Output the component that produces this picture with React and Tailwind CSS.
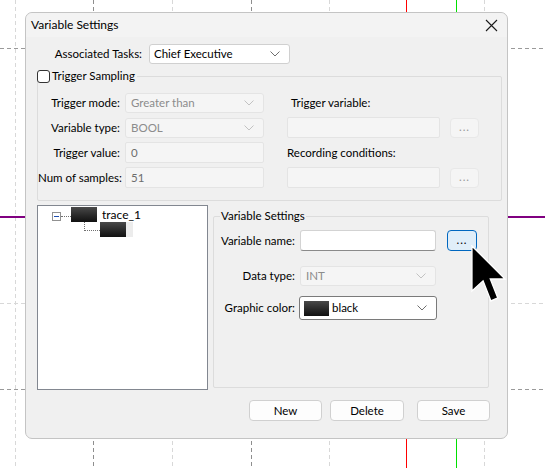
import React from 'react';

const FONT = "font-['Lato','Liberation_Sans',sans-serif]";

// chevron used by every combo box
function Chevron({ color = '#6f6f6f' }) {
  return (
    <svg width="10" height="6" viewBox="0 0 10 6" className="shrink-0">
      <polyline points="0.5,0.5 5,5 9.5,0.5" fill="none" stroke={color} strokeWidth="1" />
    </svg>
  );
}

/**
 * Canvas behind the dialog — dashed grid + a few signal lines
 */
function Backdrop() {
  const light = [15, 172, 329, 484];
  const dark = [93, 251];
  return (
    <svg className="absolute inset-0" width="545" height="468">
      {light.map(x => (
        <line key={x} x1={x + 0.5} y1="0" x2={x + 0.5} y2="468" stroke="#d8d8d8" strokeDasharray="4 3" />
      ))}
      {dark.map(x => (
        <line key={x} x1={x + 0.5} y1="0" x2={x + 0.5} y2="468" stroke="#8e8e8e" strokeDasharray="4 3" />
      ))}
      <line x1="0" y1="48.5" x2="545" y2="48.5" stroke="#9a9a9a" strokeDasharray="4 3" />
      <line x1="0" y1="303.5" x2="545" y2="303.5" stroke="#d8d8d8" strokeDasharray="4 3" />
      <line x1="0" y1="389.5" x2="545" y2="389.5" stroke="#9a9a9a" strokeDasharray="4 3" />
      <line x1="406.5" y1="0" x2="406.5" y2="468" stroke="#ff0000" />
      <line x1="456.5" y1="0" x2="456.5" y2="468" stroke="#00e000" />
      <line x1="0" y1="217" x2="545" y2="217" stroke="#800080" strokeWidth="2" />
    </svg>
  );
}

function DisabledSelect({ value, width = 'w-[139px]' }) {
  return (
    <div className={`flex items-center justify-between h-[20px] ${width} rounded-[3px] border border-[#e4e4e4] bg-[#f5f5f5] pl-[5px] pr-[9px] text-[#8c8c8c]`}>
      <span>{value}</span>
      <Chevron color="#c2c2c2" />
    </div>
  );
}

function DisabledInput({ value = '', width = 'w-[139px]' }) {
  return (
    <div className={`flex items-center h-[21px] ${width} rounded-[2px] border border-[#e4e4e4] bg-[#f5f5f5] pl-[5px] text-[#6d6d6d]`}>
      {value}
    </div>
  );
}

function DotsButton() {
  return (
    <div className="ml-[10px] flex items-end justify-center h-[20px] w-[29px] rounded-[4px] border border-[#e8e8e8] bg-[#f5f5f5] pb-[4px] text-[#9a9a9a] tracking-[1px] leading-none">
      ...
    </div>
  );
}

function TriggerRow({ label, left, right }) {
  return (
    <div className="flex items-center h-[21px]">
      <div className="w-[82px] text-right whitespace-nowrap">{label}</div>
      <div className="ml-[5px]">{left}</div>
      <div className="ml-[23px] flex items-center">{right}</div>
    </div>
  );
}

function TreeView() {
  return (
    <div className="w-[171px] h-[185px] border border-[#828790] bg-white">
      <div className="flex items-center mt-[1px] ml-[14px] h-[15px]">
        <div className="w-[9px] h-[9px] mt-[3px] border border-[#919191] flex items-center justify-center">
          <div className="w-[5px] h-px bg-[#1f4fb0]" />
        </div>
        <div className="w-[10px] mt-[3px] border-t border-dotted border-[#707070]" />
        <div className="w-[26px] h-[15px] bg-linear-to-b from-[#4a4a4a] to-[#111111]" />
        <span className="ml-[5px] text-[12px]">trace_1</span>
      </div>
      <div className="flex ml-[46px] h-[15px]">
        <div className="w-[16px] h-[9px] border-l border-b border-dotted border-[#707070]" />
        <div className="w-[26px] h-[15px] bg-linear-to-b from-[#4a4a4a] to-[#111111]" />
        <div className="w-[7px] h-[15px] bg-[#ececec]" />
      </div>
    </div>
  );
}

function Cursor() {
  return (
    <svg className="absolute left-[445px] top-[232px]" width="38" height="62" viewBox="-0.3 -0.3 12.6 20.6">
      <path
        d="M0 0 V15 L3.7 11.6 L6.3 18.3 L8.6 17.3 L6.1 11 H11 Z"
        fill="#000"
        stroke="#fff"
        strokeWidth="0.45"
        strokeLinejoin="miter"
      />
    </svg>
  );
}

export default function App() {
  return (
    <div className={`relative w-[545px] h-[468px] overflow-hidden bg-white pt-[12px] pl-[25px] text-[11.5px] text-black ${FONT}`}>
      <Backdrop />

      <div className="relative w-[483px] h-[427px] rounded-[7px] border border-[#c4c4c4] bg-[#f0f0f0]">
        {/* Title bar */}
        <div className="flex items-center justify-between h-[24px] pl-[5px] pr-[9px] bg-[#f3f3f3] rounded-t-[7px]">
          <span className="text-[12px]">Variable Settings</span>
          <svg width="13" height="13" viewBox="0 0 13 13">
            <path d="M1 1 L12 12 M12 1 L1 12" stroke="#1a1a1a" strokeWidth="1.1" />
          </svg>
        </div>

        {/* Associated tasks */}
        <div className="mt-[7px] flex items-center h-[20px]">
          <div className="w-[116px] text-right">Associated Tasks:</div>
          <div className="ml-[7px] flex items-center justify-between h-[20px] w-[141px] rounded-[3px] border border-[#d0d0d0] bg-white pl-[4px] pr-[9px]">
            <span>Chief Executive</span>
            <Chevron />
          </div>
        </div>

        {/* Trigger sampling group */}
        <fieldset className="mt-[4px] ml-[11px] w-[465px] rounded-[2px] border border-[#dcdcdc] pb-[12px]">
          <legend className="h-[16px] pr-[2px]">
            <span className="flex items-center h-[16px] -ml-[1px]">
              <span className="w-[13px] h-[13px] rounded-[3px] border border-[#333] bg-white" />
              <span className="ml-[2px]">Trigger Sampling</span>
            </span>
          </legend>
          <div className="mt-[8px] flex flex-col gap-[4px]">
            <TriggerRow
              label="Trigger mode:"
              left={<DisabledSelect value="Greater than" />}
              right={<span className="pl-[4px]">Trigger variable:</span>}
            />
            <TriggerRow
              label="Variable type:"
              left={<DisabledSelect value="BOOL" />}
              right={
                <>
                  <DisabledInput width="w-[153px]" />
                  <DotsButton />
                </>
              }
            />
            <TriggerRow
              label="Trigger value:"
              left={<DisabledInput value="0" />}
              right={<span>Recording conditions:</span>}
            />
            <TriggerRow
              label="Num of samples:"
              left={<DisabledInput value="51" />}
              right={
                <>
                  <DisabledInput width="w-[153px]" />
                  <DotsButton />
                </>
              }
            />
          </div>
        </fieldset>

        {/* Tree + variable settings */}
        <div className="mt-[4px] ml-[11px] flex items-start">
          <TreeView />
          <fieldset className="ml-[5px] mt-[3px] w-[276px] h-[180px] rounded-[2px] border border-[#dcdcdc]">
            <legend className="ml-[6px] px-[1px] h-[16px] leading-[16px]">Variable Settings</legend>

            <div className="mt-[6px] flex items-center h-[21px]">
              <div className="w-[81px] text-right">Variable name:</div>
              <div className="ml-[5px] h-[21px] w-[136px] rounded-[3px] border border-[#d3d3d3] border-b-[#8a8a8a] bg-white" />
              <div className="ml-[11px] flex items-end justify-center h-[21px] w-[30px] rounded-[4px] border border-[#0067c0] bg-[#e0eef9] pb-[5px] tracking-[1px] leading-none">
                ...
              </div>
            </div>

            <div className="mt-[15px] flex items-center h-[20px]">
              <div className="w-[81px] text-right">Data type:</div>
              <div className="ml-[5px]">
                <DisabledSelect value="INT" width="w-[136px]" />
              </div>
            </div>

            <div className="mt-[10px] flex items-center h-[24px]">
              <div className="w-[81px] text-right">Graphic color:</div>
              <div className="ml-[4px] flex items-center justify-between h-[24px] w-[138px] rounded-[3px] border border-[#7a7a7a] bg-white pl-[4px] pr-[9px]">
                <span className="flex items-center">
                  <span className="w-[25px] h-[15px] bg-linear-to-b from-[#4a4a4a] to-[#111111]" />
                  <span className="ml-[3px]">black</span>
                </span>
                <Chevron />
              </div>
            </div>
          </fieldset>
        </div>

        {/* Buttons */}
        <div className="mt-[10px] flex items-center">
          <button className="ml-[223px] h-[21px] w-[73px] rounded-[4px] border border-[#d0d0d0] bg-[#fdfdfd]">New</button>
          <button className="ml-[8px] h-[21px] w-[74px] rounded-[4px] border border-[#d0d0d0] bg-[#fdfdfd]">Delete</button>
          <button className="ml-[13px] h-[21px] w-[73px] rounded-[4px] border border-[#d0d0d0] bg-[#fdfdfd]">Save</button>
        </div>

        <Cursor />
      </div>
    </div>
  );
}
